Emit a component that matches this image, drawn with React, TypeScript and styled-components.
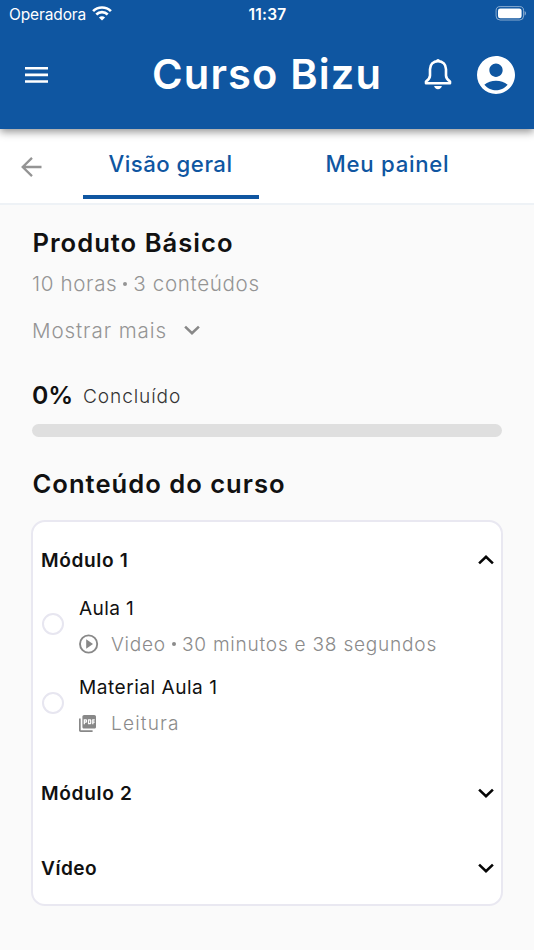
import React, { useState } from "react";
import styled, { createGlobalStyle } from "styled-components";

const GlobalStyle = createGlobalStyle`
  * { box-sizing: border-box; }
  html, body { margin: 0; padding: 0; background: #fafafa; }
  body { font-family: Inter, "Open Sans", sans-serif; color: #111; }
  button { font: inherit; color: inherit; border: 0; padding: 0; background: none; cursor: pointer; }
  svg { display: block; flex: none; }
`;

const Screen = styled.div`
  width: 534px;
  height: 950px;
  overflow: hidden;
  background: #fafafa;
  display: flex;
  flex-direction: column;
`;

const Header = styled.header`
  height: 129px;
  flex: none;
  background: #0f56a1;
  color: #fff;
  box-shadow: 0 3px 8px rgba(0, 0, 0, 0.42);
  z-index: 1;
`;

const StatusBar = styled.div`
  height: 28px;
  padding: 0 8px 0 9px;
  display: grid;
  grid-template-columns: 1fr auto 1fr;
  align-items: center;
  font-size: 15.5px;
  line-height: 28px;
`;

const Carrier = styled.div`
  display: flex;
  align-items: center;
  gap: 6px;
  letter-spacing: -0.13px;
  svg { margin-top: -2px; }
`;

const Clock = styled.div`
  font-weight: 600;
  letter-spacing: 0.2px;
  padding-top: 1px;
`;

const BatterySlot = styled.div`
  display: flex;
  justify-content: flex-end;
  padding-bottom: 2px;
`;

const Toolbar = styled.div`
  height: 94px;
  display: flex;
  align-items: center;
  padding: 0 14px 0 25px;
`;

const Brand = styled.h1`
  margin: 0 0 2px 104px;
  width: 272px;
  font-size: 41.6px;
  line-height: 50px;
  font-weight: 640;
  letter-spacing: 1.15px;
  white-space: nowrap;
`;

const IconButton = styled.button<{ $gap?: number; $lift?: number }>`
  display: flex;
  margin-left: ${(p) => p.$gap ?? 0}px;
  margin-bottom: ${(p) => p.$lift ?? 0}px;
`;

const Nav = styled.nav`
  height: 76px;
  flex: none;
  display: flex;
  background: #fff;
  border-bottom: 2px solid #eef2f6;
`;

const BackButton = styled.button`
  width: 62px;
  height: 76px;
  display: flex;
  align-items: center;
  padding-left: 20px;
`;

const TabSlot = styled.div`
  width: 217px;
  display: flex;
  justify-content: center;
`;

const Tab = styled.button<{ $active: boolean; $track: number }>`
  width: 176px;
  height: 70px;
  padding: 3px 0 0;
  border-bottom: 4px solid ${(p) => (p.$active ? "#0f56a1" : "transparent")};
  color: #0f56a1;
  font-size: 22.2px;
  font-weight: 540;
  letter-spacing: ${(p) => p.$track}px;
`;

const Content = styled.main`
  padding: 0 31px;
  display: flex;
  flex-direction: column;
`;

const Heading = styled.h2<{ $top: number }>`
  margin: ${(p) => p.$top}px 0 0 1.5px;
  font-size: 25.6px;
  line-height: 32px;
  font-weight: 560;
  letter-spacing: 1px;
  white-space: nowrap;
`;

const Meta = styled.p`
  margin: 9px 0 0 1px;
  font-size: 20.6px;
  line-height: 32px;
  font-weight: 300;
  letter-spacing: 0.63px;
  color: #949494;
`;

const Dot = styled.span`
  display: inline-block;
  width: 4px;
  height: 4px;
  border-radius: 50%;
  margin: 0 6px 5px;
  background: currentColor;
`;

const ShowMore = styled.button`
  && {
    align-self: flex-start;
    display: flex;
    align-items: center;
    gap: 17px;
    margin: 14px 0 0 1px;
    height: 32px;
    font-size: 20.6px;
    font-weight: 300;
    letter-spacing: 0.9px;
    color: #949494;
  }
`;

const ProgressLabel = styled.div`
  display: flex;
  align-items: center;
  height: 32px;
  margin: 33px 0 0 1px;
`;

const Percent = styled.strong`
  width: 51px;
  font-size: 24.8px;
  font-weight: 560;
`;

const Done = styled.span`
  font-size: 19.1px;
  font-weight: 300;
  letter-spacing: 0.9px;
  padding-top: 1px;
  color: #333;
`;

const Track = styled.div`
  height: 13px;
  margin: 13px 1px 0;
  border-radius: 6.5px;
  background: #dfdfdf;
`;

const Card = styled.section`
  margin: 20px 0 0;
  height: 386px;
  padding: 0 7px 0 8px;
  border: 2px solid #e9e8f1;
  border-radius: 14px;
  background: #fff;
`;

const ModuleHeader = styled.button<{ $track: number }>`
  width: 100%;
  height: 75px;
  display: flex;
  align-items: center;
  justify-content: space-between;
  font-size: 19.1px;
  font-weight: 560;
  letter-spacing: ${(p) => p.$track}px;
`;

const Lessons = styled.ul`
  list-style: none;
  margin: -4px 0 0;
  padding: 0;
  height: 162px;
`;

const Lesson = styled.li`
  height: 79px;
  display: flex;
`;

const Check = styled.span`
  width: 22px;
  height: 22px;
  margin: 20px 15px 0 1px;
  border: 2px solid #e7e6f0;
  border-radius: 50%;
`;

const LessonText = styled.div`
  display: flex;
  flex-direction: column;
  white-space: nowrap;
`;

const LessonTitle = styled.div<{ $track: number }>`
  height: 30px;
  line-height: 30px;
  font-size: 19.1px;
  font-weight: 380;
  letter-spacing: ${(p) => p.$track}px;
`;

const LessonInfo = styled.div<{ $track: number }>`
  display: flex;
  align-items: center;
  height: 30px;
  margin-top: 6px;
  font-size: 19.1px;
  font-weight: 300;
  letter-spacing: ${(p) => p.$track}px;
  color: #8b8b8b;
`;

const InfoIcon = styled.span`
  width: 32px;
  display: flex;
`;

const Wifi = () => (
  <svg width="20" height="15" viewBox="0 0 20 15" fill="none" stroke="#fff" strokeWidth="2.7">
    <path d="M1.1 5.1C6 .3 14 .3 18.9 5.1" />
    <path d="M4.3 8.5C7.5 5.4 12.5 5.4 15.7 8.5" />
    <path d="M10 14.6 6.9 11.5C8.6 9.9 11.4 9.900 13.1 11.5Z" fill="#fff" stroke="none" />
  </svg>
);

const Battery = () => (
  <svg width="31" height="15" viewBox="0 0 31 15">
    <rect x="1.100" y=".6" width="27.500" height="13.4" rx="4" fill="none" stroke="#fff" strokeOpacity=".5" />
    <rect x="3" y="2.4" width="23.600" height="9.8" rx="2.3" fill="#fff" />
    <path d="M29.700 5c1.500.8 1.500 3.800 0 4.600Z" fill="#fff" fillOpacity=".6" />
  </svg>
);

const Menu = () => (
  <svg width="23" height="16" viewBox="0 0 23 16" fill="#fff">
    <path d="M0 0h23v2.6H0zM0 6.6h23v2.6H0zM0 13.2h23v2.6H0z" />
  </svg>
);

const Bell = () => (
  <svg width="28" height="32" viewBox="0 0 28 32">
    <path
      d="M14 3.1C9.2 3.1 6 6.7 6 11.2V17.500C6 20 5 21.400 2 23.500V25.2H26V23.5C23 21.400 22 20 22 17.500V11.2C22 6.7 18.8 3.1 14 3.1Z"
      fill="none" stroke="#fff" strokeWidth="2.6" strokeLinejoin="round"
    />
    <path d="M12 3.2C12 .2 16 .2 16 3.2ZM10.1 28H17.900C17.5 29.9 16 31.2 14 31.2S10.5 29.9 10.1 28Z" fill="#fff" />
  </svg>
);

const Account = () => (
  <svg width="38" height="38" viewBox="2 2 20 20" fill="#fff">
    <path d="M12 2C6.48 2 2 6.48 2 12s4.48 10 10 10 10-4.48 10-10S17.52 2 12 2zm0 4c1.93 0 3.5 1.57 3.5 3.5S13.93 13 12 13s-3.5-1.57-3.5-3.5S10.07 6 12 6zm0 14c-2.03 0-4.43-.82-6.14-2.88C7.55 15.8 9.68 15 12 15s4.45.8 6.14 2.12C16.43 19.18 14.03 20 12 20z" />
  </svg>
);

const Arrow = () => (
  <svg width="22" height="20" viewBox="0 0 22 20" fill="none" stroke="#949494" strokeWidth="2.3">
    <path d="M21.5 10H2.5M12 .9 2.7 10l9.3 9.1" />
  </svg>
);

const Chevron = ({ up = false, color = "#050505" }: { up?: boolean; color?: string }) => (
  <svg width="16" height="10" viewBox="0 0 16 10" fill="none" stroke={color} strokeWidth="2.6">
    <path d={up ? "M1.1 8.4 8 1.9l6.9 6.5" : "M1.1 1.6 8 8.1l6.9-6.5"} />
  </svg>
);

const Play = () => (
  <svg width="20" height="20" viewBox="0 0 20 20">
    <circle cx="9.6" cy="10" r="8.6" fill="none" stroke="#888" strokeWidth="1.9" />
    <path d="M7.2 5.3v9.4l6.800-4.700Z" fill="#888" />
  </svg>
);

const Pdf = () => (
  <svg width="17" height="17" viewBox="2 2 20 20" fill="#888">
    <path d="M20 2H8c-1.1 0-2 .9-2 2v12c0 1.1.9 2 2 2h12c1.1 0 2-.9 2-2V4c0-1.1-.9-2-2-2zm-8.500 7.500c0 .83-.67 1.500-1.500 1.500H9v2H7.500V7H10c.83 0 1.500.67 1.500 1.500v1zm5 2c0 .83-.67 1.500-1.500 1.500h-2.500V7H15c.83 0 1.500.67 1.500 1.500v3zm4-3H19v1h1.500V11H19v2h-1.500V7h3v1.500zM9 9.500h1v-1H9v1zM4 6H2v14c0 1.100.9 2 2 2h14v-2H4V6zm10 5.500h1v-3h-1v3z" />
  </svg>
);

export default function App() {
  const [tab, setTab] = useState(0);
  const [open, setOpen] = useState(true);

  return (
    <Screen>
      <GlobalStyle />
      <Header>
        <StatusBar>
          <Carrier>Operadora <Wifi /></Carrier>
          <Clock>11:37</Clock>
          <BatterySlot><Battery /></BatterySlot>
        </StatusBar>
        <Toolbar>
          <IconButton aria-label="Menu"><Menu /></IconButton>
          <Brand>Curso Bizu</Brand>
          <IconButton aria-label="Notificações" $lift={2}><Bell /></IconButton>
          <IconButton aria-label="Conta" $gap={25} $lift={1}><Account /></IconButton>
        </Toolbar>
      </Header>

      <Nav>
        <BackButton aria-label="Voltar"><Arrow /></BackButton>
        <TabSlot><Tab $track={0.5} $active={tab === 0} onClick={() => setTab(0)}>Visão geral</Tab></TabSlot>
        <TabSlot><Tab $track={0.72} $active={tab === 1} onClick={() => setTab(1)}>Meu painel</Tab></TabSlot>
      </Nav>

      <Content>
        <Heading $top={22}>Produto Básico</Heading>
        <Meta>10 horas<Dot />3 conteúdos</Meta>
        <ShowMore>Mostrar mais <Chevron color="#888" /></ShowMore>

        <ProgressLabel>
          <Percent>0%</Percent>
          <Done>Concluído</Done>
        </ProgressLabel>
        <Track />

        <Heading $top={31}>Conteúdo do curso</Heading>
        <Card>
          <ModuleHeader $track={0.63} onClick={() => setOpen(!open)}>Módulo 1 <Chevron up={open} /></ModuleHeader>
          {open && (
            <Lessons>
              <Lesson>
                <Check />
                <LessonText>
                  <LessonTitle $track={0.35}>Aula 1</LessonTitle>
                  <LessonInfo $track={0.75}>
                    <InfoIcon><Play /></InfoIcon>
                    <span>Video<Dot />30 minutos e 38 segundos</span>
                  </LessonInfo>
                </LessonText>
              </Lesson>
              <Lesson>
                <Check />
                <LessonText>
                  <LessonTitle $track={0.5}>Material Aula 1</LessonTitle>
                  <LessonInfo $track={1.17}>
                    <InfoIcon><Pdf /></InfoIcon>
                    <span>Leitura</span>
                  </LessonInfo>
                </LessonText>
              </Lesson>
            </Lessons>
          )}
          <ModuleHeader $track={0.67}>Módulo 2 <Chevron /></ModuleHeader>
          <ModuleHeader $track={0.5}>Vídeo <Chevron /></ModuleHeader>
        </Card>
      </Content>
    </Screen>
  );
}
